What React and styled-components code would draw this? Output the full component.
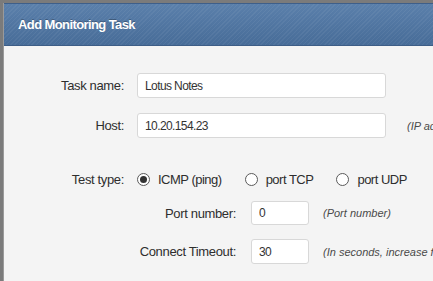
import React from 'react';
import styled, { createGlobalStyle } from 'styled-components';

const GlobalStyle = createGlobalStyle`
  html, body {
    margin: 0;
    padding: 0;
    background: #7b7b7b;
    overflow: hidden;
  }
  body {
    font-family: "Liberation Sans", Arial, sans-serif;
  }
`;

const Dialog = styled.div`
  margin: 3px 0 0 3px;
  width: 430px;
  height: 278px;
  overflow: hidden;
  background: #f4f4f4;
  border-left: 1px solid #9a9a9a;
`;

const Header = styled.div`
  height: 41px;
  display: flex;
  align-items: center;
  padding-left: 14px;
  border-top: 1px solid #3e5f8a;
  border-bottom: 1px solid #3d5d86;
  background:
    repeating-linear-gradient(
      135deg,
      rgba(255, 255, 255, 0.05) 0px,
      rgba(255, 255, 255, 0.05) 1px,
      rgba(0, 0, 0, 0) 1px,
      rgba(0, 0, 0, 0) 3px
    ),
    linear-gradient(#5b80ab, #476c98);
`;

const Title = styled.h1`
  margin: 0;
  font-size: 13px;
  font-weight: bold;
  letter-spacing: -0.6px;
  color: #fff;
  text-shadow: 0 -1px 0 rgba(0, 0, 0, 0.25);
`;

const Body = styled.div`
  padding-top: 27px;
  display: flex;
  flex-direction: column;
`;

const Row = styled.div`
  display: flex;
  align-items: center;
  margin-top: ${(p) => p.top || 0}px;
  height: ${(p) => p.h || 25}px;
`;

const Label = styled.label`
  width: ${(p) => p.w}px;
  margin-right: ${(p) => p.gap || 13}px;
  text-align: right;
  font-size: 13px;
  letter-spacing: -0.35px;
  color: #2e2e2e;
  flex-shrink: 0;
`;

const Input = styled.input`
  box-sizing: border-box;
  width: ${(p) => p.w}px;
  height: ${(p) => p.h || 25}px;
  padding: 0 0 0 7px;
  border: 1px solid #d8d8d8;
  border-radius: 3px;
  background: #fff;
  font-family: "Liberation Sans", Arial, sans-serif;
  font-size: 12px;
  letter-spacing: -0.6px;
  color: #333;
  outline: none;
  flex-shrink: 0;
`;

const Hint = styled.span`
  margin-left: ${(p) => p.gap}px;
  font-size: 11px;
  font-style: italic;
  color: #4a4a4a;
  white-space: nowrap;
`;

const RadioGroup = styled.div`
  display: flex;
  align-items: center;
`;

const RadioOption = styled.span`
  display: flex;
  align-items: center;
  margin-right: 23px;
  font-size: 13px;
  letter-spacing: -0.5px;
  color: #2e2e2e;
  white-space: nowrap;
`;

const RadioDot = styled.span`
  box-sizing: border-box;
  width: 13px;
  height: 13px;
  border-radius: 50%;
  border: 1px solid #5a5a5a;
  background: #fff;
  margin-right: 8px;
  display: flex;
  align-items: center;
  justify-content: center;
  &::after {
    content: '';
    width: 7px;
    height: 7px;
    border-radius: 50%;
    background: ${(p) => (p.checked ? '#333' : 'transparent')};
  }
`;

const testTypes = [
  { label: 'ICMP (ping)', checked: true },
  { label: 'port TCP' },
  { label: 'port UDP' },
];

export default function App() {
  return (
    <>
      <GlobalStyle />
      <Dialog>
        <Header>
          <Title>Add Monitoring Task</Title>
        </Header>
        <Body>
          <Row>
            <Label w={120}>Task name:</Label>
            <Input w={249} defaultValue="Lotus Notes" />
          </Row>
          <Row top={15}>
            <Label w={120}>Host:</Label>
            <Input w={249} defaultValue="10.20.154.23" />
            <Hint gap={21}>(IP address or host name)</Hint>
          </Row>
          <Row top={31} h={20}>
            <Label w={120}>Test type:</Label>
            <RadioGroup>
              {testTypes.map((t) => (
                <RadioOption key={t.label}>
                  <RadioDot checked={t.checked} />
                  {t.label}
                </RadioOption>
              ))}
            </RadioGroup>
          </Row>
          <Row top={12} h={24}>
            <Label w={232} gap={15}>Port number:</Label>
            <Input w={58} h={24} defaultValue="0" />
            <Hint gap={14}>(Port number)</Hint>
          </Row>
          <Row top={14}>
            <Label w={232} gap={15}>Connect Timeout:</Label>
            <Input w={58} defaultValue="30" />
            <Hint gap={14}>(In seconds, increase for slow hosts)</Hint>
          </Row>
        </Body>
      </Dialog>
    </>
  );
}
